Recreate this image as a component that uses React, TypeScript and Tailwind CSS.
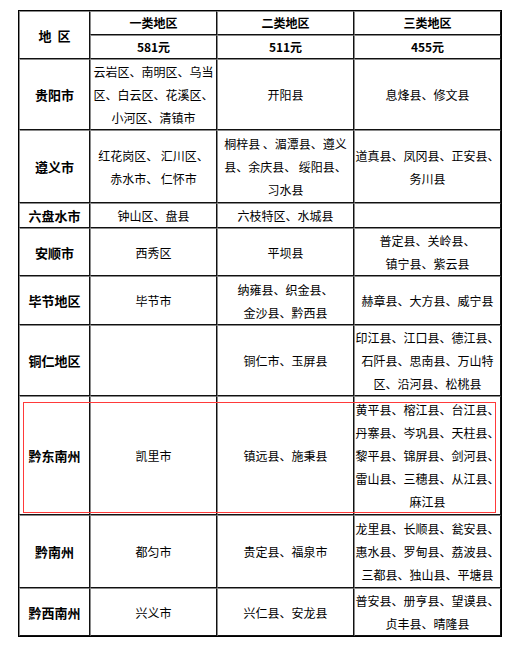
import React from "react";

const td =
  "border border-t-[#8a8a8a] border-l-[#8a8a8a] border-b-[#111] border-r-[#111] p-0 text-center align-middle whitespace-nowrap";

type Row = { name: string; h: string; c: string[][] };

const rows: Row[] = [
  {
    name: "贵阳市",
    h: "h-[71px]",
    c: [["云岩区、南明区、乌当", "区、白云区、花溪区、", "小河区、清镇市"], ["开阳县"], ["息烽县、修文县"]],
  },
  {
    name: "遵义市",
    h: "h-[73px]",
    c: [
      ["红花岗区、 汇川区、", "赤水市、 仁怀市"],
      ["桐梓县 、湄潭县、遵义", "县、余庆县、 绥阳县、", "习水县"],
      ["道真县、凤冈县、正安县、", "务川县"],
    ],
  },
  { name: "六盘水市", h: "h-[25px]", c: [["钟山区、盘县"], ["六枝特区、水城县"], []] },
  { name: "安顺市", h: "h-[48px]", c: [["西秀区"], ["平坝县"], ["普定县、关岭县、", "镇宁县、紫云县"]] },
  { name: "毕节地区", h: "h-[49px]", c: [["毕节市"], ["纳雍县、织金县、", "金沙县、黔西县"], ["赫章县、大方县、威宁县"]] },
  {
    name: "铜仁地区",
    h: "h-[71px]",
    c: [[], ["铜仁市、玉屏县"], ["印江县、江口县、德江县、", "石阡县、思南县、万山特", "区、沿河县、松桃县"]],
  },
  {
    name: "黔东南州",
    h: "h-[119px]",
    c: [
      ["凯里市"],
      ["镇远县、施秉县"],
      ["黄平县、榕江县、台江县、", "丹寨县、岑巩县、天柱县、", "黎平县、锦屏县、剑河县、", "雷山县、三穗县、从江县、", "麻江县"],
    ],
  },
  {
    name: "黔南州",
    h: "h-[73px]",
    c: [["都匀市"], ["贵定县、福泉市"], ["龙里县、长顺县、瓮安县、", "惠水县、罗甸县、荔波县、", "三都县、独山县、平塘县"]],
  },
  {
    name: "黔西南州",
    h: "h-[48px]",
    c: [["兴义市"], ["兴仁县、安龙县"], ["普安县、册亨县、望谟县、", "贞丰县、晴隆县"]],
  },
];

export default function App() {
  return (
    <div
      className="relative w-[525px] h-[647px] bg-white text-black text-[12px] leading-[23px]"
      style={{ fontFamily: '"Noto Sans CJK SC", "Noto Sans", sans-serif' }}
    >
      <div className="pt-[10px] pl-[18px]">
        <table className="table-fixed border-separate border-spacing-0 w-[482px] border border-black">
          <colgroup>
            <col className="w-[71px]" />
            <col className="w-[127px]" />
            <col className="w-[137px]" />
            <col className="w-[147px]" />
          </colgroup>
          <tbody>
            <tr className="h-[24px]">
              <td rowSpan={2} className={td + " font-bold text-[13px]"}>
                地&nbsp;&nbsp;区
              </td>
              <td className={td + " font-bold leading-[20px]"}>一类地区</td>
              <td className={td + " font-bold leading-[20px]"}>二类地区</td>
              <td className={td + " font-bold leading-[20px]"}>三类地区</td>
            </tr>
            <tr className="h-[24px]">
              <td className={td + " font-bold leading-[20px]"}>581元</td>
              <td className={td + " font-bold leading-[20px]"}>511元</td>
              <td className={td + " font-bold leading-[20px]"}>455元</td>
            </tr>
            {rows.map((r) => (
              <tr key={r.name} className={r.h}>
                <td className={td + " font-bold text-[13px]"}>{r.name}</td>
                {r.c.map((lines, i) => (
                  <td key={i} className={td}>
                    {lines.map((l, j) => (
                      <div key={j}>{l}</div>
                    ))}
                  </td>
                ))}
              </tr>
            ))}
          </tbody>
        </table>
      </div>
      <div className="absolute left-[23px] top-[402px] w-[473px] h-[111px] border border-[#ff3a3a] pointer-events-none" />
    </div>
  );
}
